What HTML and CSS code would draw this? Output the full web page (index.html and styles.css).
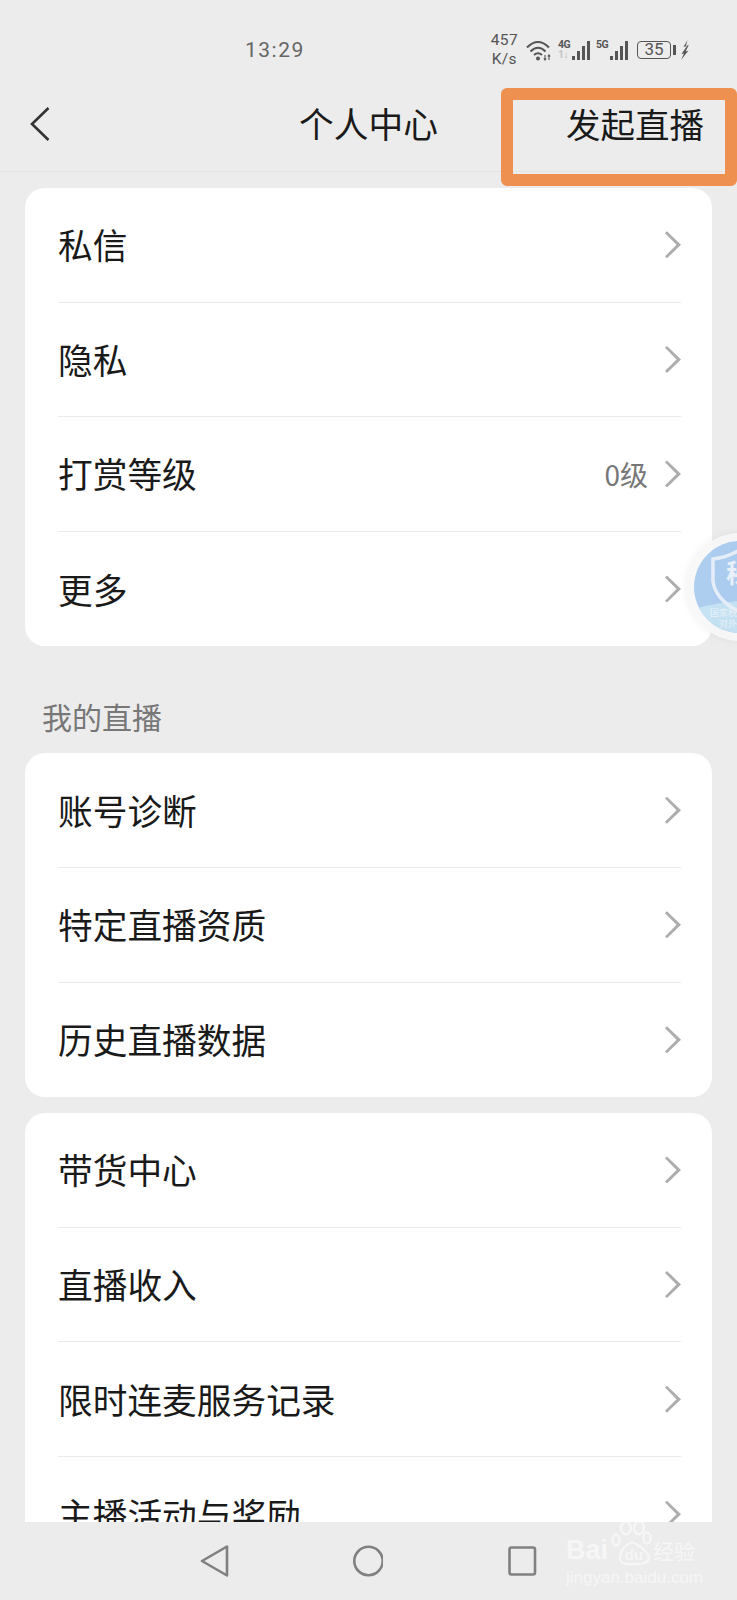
FILE: index.html
```html
<!DOCTYPE html>
<html lang="zh-CN">

<head>
	<meta charset="UTF-8">
	<title>个人中心</title>
	<meta name="viewport" content="width=device-width,initial-scale=1">
	<link rel="stylesheet" href="styles.css">
</head>

<body>
	<div class="phone">
		<div class="status-bar">
			<span class="status-time">13:29</span>
			<div class="status-icons">
				<span class="net-speed">457<br>K/s</span>
				<svg class="icon-wifi" width="26" height="22" viewBox="0 0 26 22">
					<path d="M1 8.5 Q12 -2.5 23 8.5 M4.5 12.5 Q12 5 19.5 12.5 M8 16 Q12 12.5 16 16" fill="none" stroke="#555" stroke-width="2" />
					<circle cx="12" cy="19.5" r="2" fill="#555" />
					<path d="M19 16v5M17.8 19.5l1.2 1.5 1.2-1.5M23 21v-5M21.8 17.5l1.2-1.5 1.2 1.5" fill="none" stroke="#555" stroke-width="1.1" />
				</svg>
				<div class="signal">
					<div class="signal-tags"><b>4G</b><b class="dim">1↓</b></div>
					<div class="bars"><i class="b1"></i><i class="b2"></i><i class="b3"></i><i class="b4"></i></div>
				</div>
				<div class="signal">
					<div class="signal-tags"><b>5G</b></div>
					<div class="bars"><i class="b1"></i><i class="b2"></i><i class="b3"></i><i class="b4"></i></div>
				</div>
				<div class="battery"><span class="battery-body">35</span><span class="battery-cap"></span></div>
				<svg class="icon-bolt" width="9" height="20" viewBox="0 0 9 20">
					<path d="M7.5 0 L3.5 7 L7 6 L1.5 14 L4 13.5 L1 20 L8.5 10.5 L5.5 11.5 L8.8 5 L5.8 6 Z" fill="#555" />
				</svg>
			</div>
		</div>

		<header class="top-bar">
			<svg class="back-icon" width="20" height="36" viewBox="0 0 20 36">
				<path d="M18.5 2 L2 18 L18.5 34" fill="none" stroke="#333" stroke-width="2.6" />
			</svg>
			<h1 class="top-title">个人中心</h1>
			<span class="top-action">发起直播</span>
		</header>

		<main class="content">
			<section class="card">
				<div class="row"><span class="row-name">私信</span><span class="chevron"></span></div>
				<div class="row"><span class="row-name">隐私</span><span class="chevron"></span></div>
				<div class="row"><span class="row-name">打赏等级</span><span class="row-value">0级</span><span class="chevron"></span></div>
				<div class="row"><span class="row-name">更多</span><span class="chevron"></span></div>
			</section>

			<h2 class="section-label">我的直播</h2>

			<section class="card">
				<div class="row"><span class="row-name">账号诊断</span><span class="chevron"></span></div>
				<div class="row"><span class="row-name">特定直播资质</span><span class="chevron"></span></div>
				<div class="row"><span class="row-name">历史直播数据</span><span class="chevron"></span></div>
			</section>

			<section class="card card-gap">
				<div class="row"><span class="row-name">带货中心</span><span class="chevron"></span></div>
				<div class="row"><span class="row-name">直播收入</span><span class="chevron"></span></div>
				<div class="row"><span class="row-name">限时连麦服务记录</span><span class="chevron"></span></div>
				<div class="row"><span class="row-name">主播活动与奖励</span><span class="chevron"></span></div>
			</section>
		</main>

		<nav class="nav-bar">
			<svg width="30" height="34" viewBox="0 0 30 34">
				<path d="M28 2.5 V31.5 L3 17 Z" fill="none" stroke="#808080" stroke-width="2.6" stroke-linejoin="round" />
			</svg>
			<svg width="30" height="34" viewBox="0 0 30 34">
				<circle cx="15.5" cy="17" r="14.2" fill="none" stroke="#808080" stroke-width="2.6" />
			</svg>
			<svg width="30" height="34" viewBox="0 0 30 34">
				<rect x="2.5" y="3.5" width="25.5" height="27" rx="2" fill="none" stroke="#808080" stroke-width="2.6" />
			</svg>
		</nav>

		<div class="float-badge">
			<div class="float-badge-inner">
				<svg class="float-shield" width="54" height="64" viewBox="0 0 54 64">
					<path d="M27 2 Q14 9 2 10 V32 Q4 50 27 62 Q50 50 52 32 V10 Q40 9 27 2 Z" fill="none" stroke="#e4eefa" stroke-width="3.5" />
				</svg>
				<span class="float-char">秘</span>
				<span class="float-caption">国家税务总局<br>对外发布</span>
			</div>
		</div>

		<div class="highlight-box"></div>

		<div class="watermark">
			<div class="watermark-logo">
				<span class="watermark-bai">Bai</span>
				<svg width="42" height="48" viewBox="0 0 42 48">
					<g fill="none" stroke="#fff" stroke-width="2.4">
						<ellipse cx="15" cy="8" rx="5" ry="6.5" />
						<ellipse cx="28" cy="8" rx="5" ry="6.5" />
						<ellipse cx="36" cy="18" rx="3.6" ry="5.5" />
						<ellipse cx="5" cy="20" rx="3.6" ry="5.5" />
						<path d="M9 37 Q10 27 21 22 Q33 27 38 37 Q38 45 22 44 Q8 45 9 37 Z" />
					</g>
					<text class="watermark-du" x="23" y="40" text-anchor="middle">du</text>
				</svg>
				<span class="watermark-jy">经验</span>
			</div>
			<div class="watermark-url">jingyan.baidu.com</div>
		</div>
	</div>
</body>

</html>
```

FILE: styles.css
```css
* {
	box-sizing: border-box;
}

html,
body {
	margin: 0;
	padding: 0;
}

body {
	font-family: "Noto Sans CJK SC", "Noto Sans", sans-serif;
	background: #ececec;
	color: #1a1a1a;
}

.phone {
	position: relative;
	width: 737px;
	height: 1600px;
	display: flex;
	flex-direction: column;
	overflow: hidden;
	background: #ececec;
}

/* status bar */
.status-bar {
	height: 76px;
	flex: none;
	position: relative;
	display: flex;
	align-items: center;
	justify-content: flex-end;
	padding: 24px 48px 0 0;
	color: #555;
}

.status-time {
	position: absolute;
	left: 245px;
	top: 38px;
	font-family: "Roboto", sans-serif;
	font-size: 21px;
	line-height: 24px;
	letter-spacing: 1.5px;
	color: #666;
}

.status-icons {
	display: flex;
	align-items: center;
	gap: 6px;
}

.net-speed {
	font-family: "Roboto", sans-serif;
	font-size: 15.5px;
	line-height: 19px;
	text-align: center;
	margin-right: 2px;
	letter-spacing: 0.4px;
}

.signal {
	display: flex;
	align-items: flex-end;
	gap: 1px;
	height: 20px;
}

.signal-tags {
	display: flex;
	flex-direction: column;
	align-self: flex-start;
	width: 13px;
	font-family: "Roboto", sans-serif;
	font-size: 10.5px;
	line-height: 10px;
	letter-spacing: -0.5px;
}

.signal-tags .dim {
	color: #c4c4c4;
}

.bars {
	display: flex;
	align-items: flex-end;
	gap: 2px;
	height: 19px;
}

.bars i {
	display: block;
	width: 3px;
	background: #555;
}

.bars .b1 {
	height: 4px;
}

.bars .b2 {
	height: 9px;
}

.bars .b3 {
	height: 14px;
}

.bars .b4 {
	height: 19px;
}

.battery {
	display: flex;
	align-items: center;
	margin-left: 3px;
	gap: 2px;
}

.battery-body {
	width: 34px;
	height: 18px;
	border: 1.8px solid #555;
	border-radius: 4px;
	font-family: "Roboto", sans-serif;
	font-size: 17px;
	line-height: 15px;
	text-align: center;
}

.battery-cap {
	width: 3px;
	height: 10px;
	background: #555;
}

.icon-bolt {
	margin-left: -2px;
}

/* top bar */
.top-bar {
	height: 96px;
	flex: none;
	position: relative;
	display: flex;
	align-items: center;
	justify-content: flex-end;
	padding: 0 33px 2px 0;
	border-bottom: 1px solid #e4e4e4;
}

.back-icon {
	position: absolute;
	left: 30px;
	top: 30px;
}

.top-title {
	position: absolute;
	left: 0;
	right: 0;
	margin: 0;
	text-align: center;
	font-size: 34.7px;
	font-weight: 400;
	line-height: 48px;
}

.top-action {
	font-size: 34.5px;
	line-height: 48px;
}

/* list */
.content {
	flex: 1;
	min-height: 0;
	overflow: hidden;
	padding: 16px 25px 0;
}

.card {
	background: #fff;
	border-radius: 20px;
	overflow: hidden;
}

.card-gap {
	margin-top: 16px;
}

.row {
	height: 114.6px;
	margin: 0 31px 0 33px;
	display: flex;
	align-items: center;
	border-bottom: 1px solid #ebebeb;
}

.card .row:last-child {
	border-bottom: none;
}

.row-name {
	flex: 1;
	padding-bottom: 1px;
	font-size: 34.7px;
	line-height: 48px;
}

.row-value {
	font-size: 28px;
	line-height: 40px;
	color: #777;
	margin-right: 17px;
}

.chevron {
	width: 16px;
	height: 27px;
	background: #adadad;
	clip-path: polygon(0 7%, 12% 0, 100% 50%, 12% 100%, 0 93%, 72% 50%);
}

.section-label {
	margin: 0;
	height: 107px;
	padding: 45px 0 0 17px;
	font-size: 30px;
	font-weight: 400;
	line-height: 50px;
	color: #777;
}

/* bottom nav */
.nav-bar {
	height: 78px;
	flex: none;
	background: #ececec;
	display: flex;
	align-items: flex-start;
	padding: 22px 0 0 199px;
	gap: 124px;
}

/* floating shield */
.float-badge {
	position: absolute;
	left: 686px;
	top: 533px;
	width: 108px;
	height: 108px;
	border-radius: 50%;
	padding: 8px;
	background: #f8f8f8;
	opacity: 0.88;
	box-shadow: 0 0 8px rgba(0, 0, 0, 0.06);
}

.float-badge-inner {
	position: relative;
	width: 92px;
	height: 92px;
	border-radius: 50%;
	overflow: hidden;
	background: #a3c8ef;
}

.float-badge-inner::before {
	content: '';
	position: absolute;
	left: -30px;
	top: 60px;
	width: 170px;
	height: 70px;
	border-radius: 50%;
	background: #bfe0f3;
}

.float-shield {
	position: absolute;
	left: 17px;
	top: 8px;
}

.float-char {
	position: absolute;
	left: 32px;
	top: 15px;
	font-size: 26px;
	line-height: 32px;
	font-weight: 700;
	color: #e8f1fb;
}

.float-caption {
	position: absolute;
	left: 16px;
	top: 66px;
	white-space: nowrap;
	text-align: center;
	font-size: 9px;
	line-height: 11px;
	color: #e8f1fb;
}

/* orange annotation */
.highlight-box {
	position: absolute;
	left: 501px;
	top: 88px;
	width: 236px;
	height: 98px;
	border: 12px solid #ee9150;
	border-radius: 6px;
}

/* watermark */
.watermark {
	position: absolute;
	left: 566px;
	top: 1520px;
	width: 135px;
	color: #fff;
	opacity: 0.55;
}

.watermark-logo {
	display: flex;
	align-items: flex-end;
	height: 48px;
	white-space: nowrap;
}

.watermark-bai {
	width: 45px;
	font-family: "Liberation Sans", sans-serif;
	font-size: 27px;
	font-weight: 700;
	line-height: 36px;
}

.watermark-du {
	font-family: "Liberation Sans", sans-serif;
	font-size: 15px;
	font-weight: 700;
	fill: #fff;
}

.watermark-jy {
	font-size: 21px;
	line-height: 36px;
}

.watermark-url {
	margin-top: 1px;
	font-family: "Liberation Sans", sans-serif;
	font-size: 17px;
	line-height: 18px;
	white-space: nowrap;
}
```
